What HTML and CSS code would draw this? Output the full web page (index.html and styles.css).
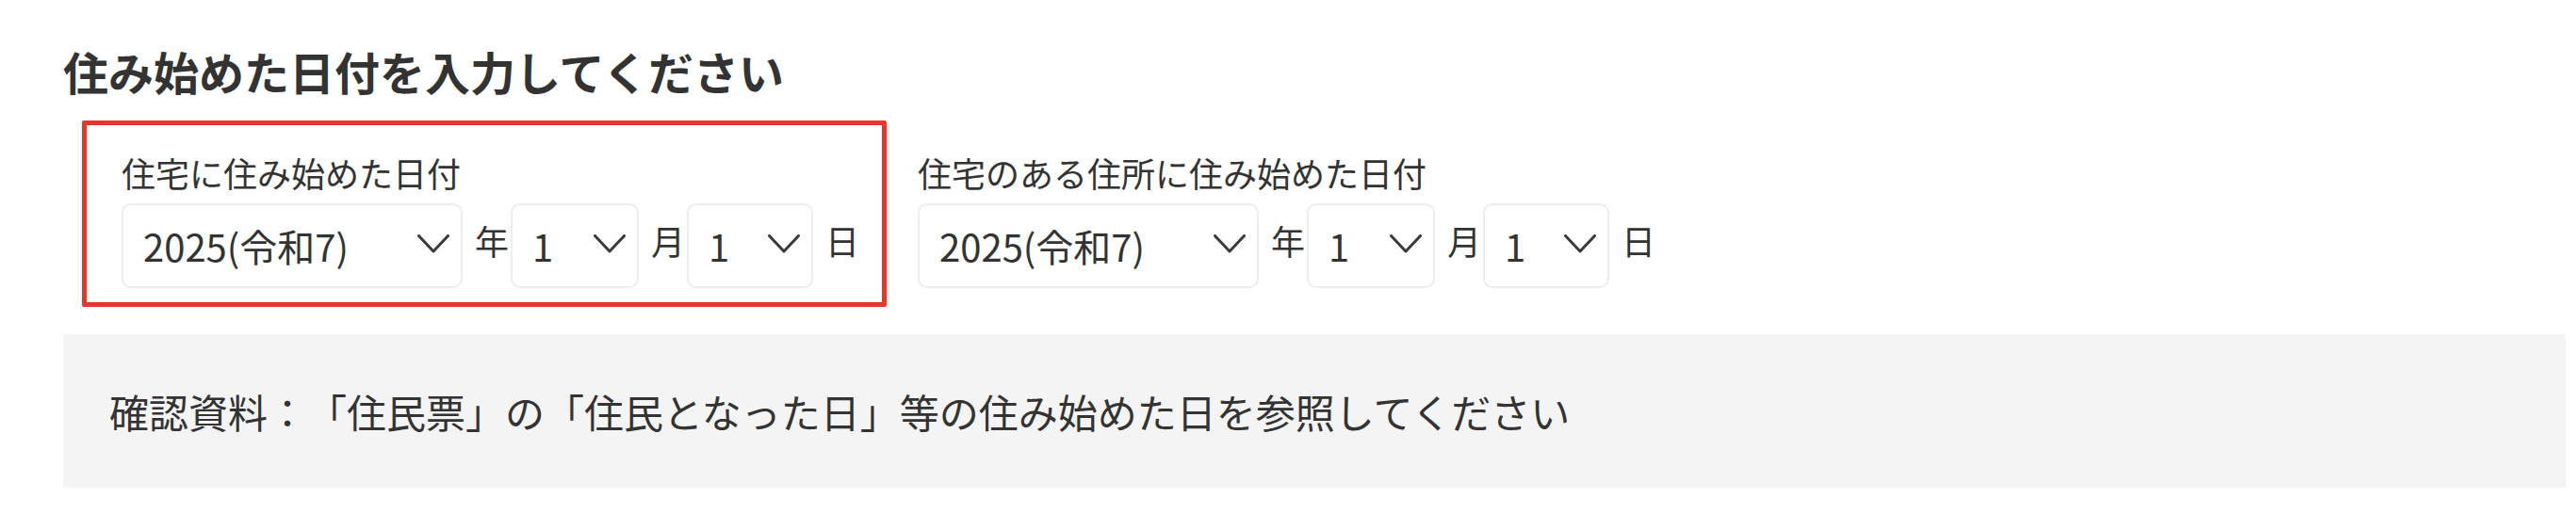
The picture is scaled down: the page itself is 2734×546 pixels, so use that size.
FILE: index.html
```html
<!DOCTYPE html>
<html lang="ja">
<head>
<meta charset="utf-8">
<title>住み始めた日付を入力してください</title>
<link rel="stylesheet" href="styles.css">
</head>
<body>
<main class="page">
  <h1 class="title">住み始めた日付を入力してください</h1>
  <div class="date-row">
    <div class="date-group date-group--highlight">
      <div class="date-label">住宅に住み始めた日付</div>
      <div class="date-fields">
        <div class="select select--year">
          <select><option>2025(令和7)</option></select>
          <svg class="chevron" viewBox="0 0 34 20" width="34" height="20"><polyline points="1.5,1.5 17,18 32.5,1.5"/></svg>
        </div>
        <span class="unit">年</span>
        <div class="select select--month">
          <select><option>1</option></select>
          <svg class="chevron" viewBox="0 0 34 20" width="34" height="20"><polyline points="1.5,1.5 17,18 32.5,1.5"/></svg>
        </div>
        <span class="unit">月</span>
        <div class="select select--day">
          <select><option>1</option></select>
          <svg class="chevron" viewBox="0 0 34 20" width="34" height="20"><polyline points="1.5,1.5 17,18 32.5,1.5"/></svg>
        </div>
        <span class="unit">日</span>
      </div>
    </div>
    <div class="date-group date-group--plain">
      <div class="date-label">住宅のある住所に住み始めた日付</div>
      <div class="date-fields">
        <div class="select select--year">
          <select><option>2025(令和7)</option></select>
          <svg class="chevron" viewBox="0 0 34 20" width="34" height="20"><polyline points="1.5,1.5 17,18 32.5,1.5"/></svg>
        </div>
        <span class="unit">年</span>
        <div class="select select--month">
          <select><option>1</option></select>
          <svg class="chevron" viewBox="0 0 34 20" width="34" height="20"><polyline points="1.5,1.5 17,18 32.5,1.5"/></svg>
        </div>
        <span class="unit">月</span>
        <div class="select select--day">
          <select><option>1</option></select>
          <svg class="chevron" viewBox="0 0 34 20" width="34" height="20"><polyline points="1.5,1.5 17,18 32.5,1.5"/></svg>
        </div>
        <span class="unit">日</span>
      </div>
    </div>
  </div>
  <div class="note">確認資料：「住民票」の「住民となった日」等の住み始めた日を参照してください</div>
</main>
</body>
</html>
```

FILE: styles.css
```css
html, body {
  margin: 0;
  padding: 0;
  background: #ffffff;
}

body {
  color: #333333;
  font-family: "Noto Sans CJK JP", "Noto Sans", sans-serif;
  text-spacing-trim: space-all;
}

.page {
  padding: 39px 11px 0 67px;
}

.title {
  margin: 0;
  font-size: 48px;
  line-height: 72px;
  font-weight: 700;
  color: #333333;
}

.date-row {
  display: flex;
  align-items: flex-start;
  margin: 17px 0 0 20px;
}

.date-group {
  border: 5px solid transparent;
  padding: 23px 22px 15px 37px;
}

.date-group--highlight {
  border-color: #e5372b;
  border-radius: 2px;
}

.date-group--plain {
  padding-left: 0;
  margin-left: 28px;
}

.date-label {
  font-size: 36px;
  line-height: 54px;
  margin-bottom: 6px;
  color: #333333;
}

.date-fields {
  display: flex;
  align-items: center;
}

.select {
  position: relative;
  box-sizing: border-box;
  height: 90px;
  border: 2px solid #ededed;
  border-radius: 10px;
  background: #ffffff;
}

.select--year {
  width: 362px;
}

.select--month {
  width: 136px;
}

.select--day {
  width: 134px;
}

.select select {
  -webkit-appearance: none;
  appearance: none;
  box-sizing: border-box;
  width: 100%;
  height: 100%;
  margin: 0;
  border: 0;
  outline: none;
  background: transparent;
  color: #333333;
  font-family: "Noto Sans CJK JP", "Noto Sans", sans-serif;
  font-size: 40px;
  padding: 0 56px 0 21px;
}

.chevron {
  position: absolute;
  top: 31px;
  right: 12px;
  pointer-events: none;
}

.chevron polyline {
  fill: none;
  stroke: #3a3a3a;
  stroke-width: 3;
  stroke-linecap: round;
  stroke-linejoin: round;
}

.unit {
  font-size: 36px;
  line-height: 54px;
  margin: 0 2px 0 13px;
  padding-bottom: 12px;
  color: #333333;
}

.note {
  margin-top: 29px;
  background: #f5f4f5;
  padding: 50px 49px;
  font-size: 42px;
  line-height: 63px;
  color: #333333;
  text-spacing-trim: space-all;
}
```
